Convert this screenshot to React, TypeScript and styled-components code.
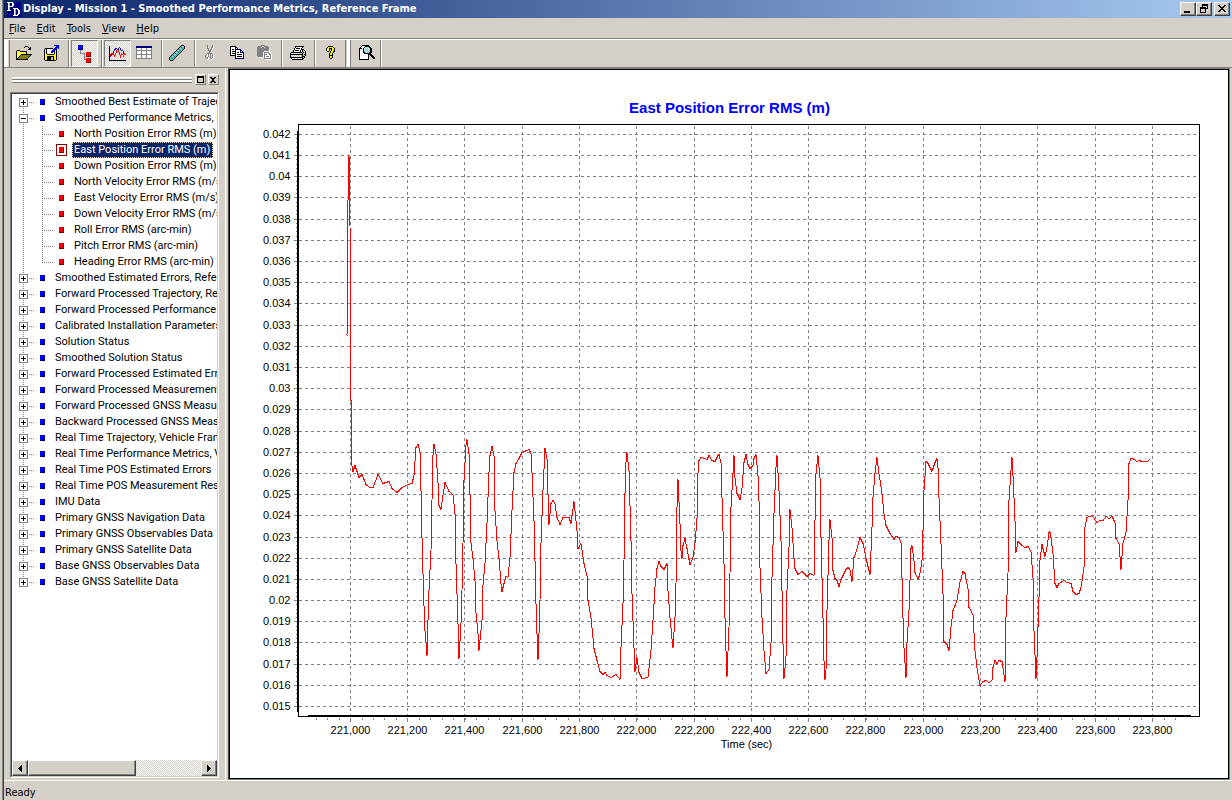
import React from "react";
import styled, { createGlobalStyle, css } from "styled-components";

const face = "#d4d0c8";
const tahoma = '"DejaVu Sans Condensed", "Liberation Sans", sans-serif';
const arial = '"Liberation Sans", Arial, sans-serif';
const compact = 'Roboto, "Liberation Sans", sans-serif';

const GlobalStyle = createGlobalStyle`
  * { box-sizing: border-box; }
  body { margin: 0; background: ${face}; color: #000; font: 11px/14px ${tahoma}; }
  button { font: inherit; color: inherit; padding: 0; margin: 0; border: 0; background: none; }
  ul { list-style: none; margin: 0; padding: 0; }
`;

const raised = css`
  background: ${face};
  border: 1px solid;
  border-color: #fff #404040 #404040 #fff;
  box-shadow: inset -1px -1px 0 #808080;
`;

const checker = css`
  background: repeating-conic-gradient(#fff 0 25%, ${face} 0 50%) 0 0 / 2px 2px;
`;

const Window = styled.div`
  display: flex;
  flex-direction: column;
  height: 100vh;
  min-height: 480px;
  border-left: 2px solid ${face};
  box-shadow: inset 1px 0 0 #808080, inset 2px 0 0 #404040;
  padding-left: 2px;
`;

const TitleBar = styled.header`
  display: flex;
  align-items: center;
  flex: none;
  height: 18px;
  padding: 0 2px 0 3px;
  background: linear-gradient(90deg, #0a246a, #a6caf0);
  color: #fff;
`;

const TitleText = styled.h1`
  flex: 1;
  margin: 0 0 0 2px;
  font: bold 11px/16px ${tahoma};
  white-space: nowrap;
  overflow: hidden;
`;

const CaptionButton = styled.button<{ $apart?: boolean }>`
  ${raised}
  display: flex;
  flex: none;
  width: 16px;
  height: 14px;
  margin-left: ${(p) => (p.$apart ? 2 : 0)}px;
`;

const MenuBar = styled.nav`
  display: flex;
  flex: none;
  gap: 11px;
  height: 22px;
  padding: 4px 5px 0;
  border-bottom: 1px solid #fff;
  box-shadow: inset 0 -1px 0 #808080;
`;

const MenuItem = styled.button`
  height: 14px;
  &::first-letter { text-decoration: underline; }
`;

const ToolBar = styled.div`
  display: flex;
  flex: none;
  height: 28px;
  border-bottom: 1px solid #808080;
`;

const Grip = styled.div`
  flex: none;
  width: 7px;
  height: 27px;
  background: linear-gradient(90deg, #fff 4px, ${face} 4px 5px, #808080 5px 6px, transparent 6px);
`;

const BandGrip = styled(Grip)`
  width: 9px;
  background: linear-gradient(90deg, transparent 1px, #808080 1px 2px, transparent 2px 3px, #fff 3px 6px, #808080 6px 7px, transparent 7px);
`;

const Separator = styled.div`
  flex: none;
  width: 6px;
  height: 27px;
  background: linear-gradient(90deg, #808080 50%, #fff 50%) 3px 0 / 2px 100% no-repeat;
`;

const BandEnd = styled(Separator)`
  background-position: 0 0;
`;

const ToolButton = styled.button<{ $pressed?: boolean }>`
  display: flex;
  flex: none;
  align-items: center;
  justify-content: center;
  width: 27px;
  height: 27px;
  padding-bottom: 2px;
  ${(p) =>
    p.$pressed &&
    css`
      ${checker}
      border: 1px solid;
      border-color: #808080 #fff #fff #808080;
      padding-bottom: 0;
    `}
`;

const Workspace = styled.main`
  display: flex;
  flex: 1;
  min-height: 0;
  padding-right: 2px;
`;

const SidePanel = styled.aside`
  display: flex;
  flex-direction: column;
  flex: none;
  width: 222px;
  padding: 6px 6px 2px 6px;
  border-right: 1px solid #fff;
  margin-right: 2px;
`;

const PanelHead = styled.div`
  display: flex;
  flex: none;
  gap: 2px;
  height: 18px;
  padding-left: 2px;
`;

const PanelGrip = styled.div`
  flex: 1;
  height: 7px;
  margin: 3px 1px 0 0;
  background: linear-gradient(#fff 0 1px, #e8e6e0 1px 2px, #808080 2px 3px, #fff 3px 5px, #808080 5px 6px, transparent 6px);
`;

const PanelButton = styled.button`
  ${raised}
  display: flex;
  flex: none;
  width: 11px;
  height: 11px;
  border-color: #fff #808080 #808080 #fff;
  box-shadow: none;
`;

const TreeBox = styled.div`
  display: flex;
  flex-direction: column;
  flex: 1;
  min-height: 0;
  background: #fff;
  border: 1px solid;
  border-color: #808080 #fff #fff #808080;
`;

const TreeInner = styled.div`
  display: flex;
  flex-direction: column;
  flex: 1;
  min-height: 0;
  border: 1px solid;
  border-color: #404040 ${face} ${face} #404040;
`;

const dotsDown = "repeating-linear-gradient(#808080 0 1px, transparent 1px 2px)";
const dotsAcross = "repeating-linear-gradient(90deg, #808080 0 1px, transparent 1px 2px)";

const Tree = styled.ul`
  flex: 1;
  min-height: 0;
  overflow: hidden;
  font: 11px/16px ${compact};
`;

const TreeRow = styled.li<{ $child?: boolean; $edge?: "first" | "last" }>`
  display: flex;
  align-items: center;
  height: 16px;
  white-space: nowrap;
  padding-left: ${(p) => (p.$child ? 44 : 7)}px;
  background:
    ${dotsDown} 11px ${(p) => (p.$edge === "first" ? "8px" : "0")} / 1px ${(p) => (p.$edge ? "8px" : "16px")} no-repeat,
    ${dotsAcross} 17px 8px / 6px 1px no-repeat;
`;

const ChildRow = styled(TreeRow)<{ $last?: boolean }>`
  background:
    ${dotsDown} 11px 0 / 1px 16px no-repeat,
    ${dotsDown} 30px 0 / 1px ${(p) => (p.$last ? 8 : 16)}px no-repeat,
    ${dotsAcross} 30px 8px / 12px 1px no-repeat;
`;

const Expander = styled.button<{ $open?: boolean }>`
  flex: none;
  width: 9px;
  height: 9px;
  margin-right: 12px;
  border: 1px solid #808080;
  background:
    linear-gradient(#000, #000) center / 5px 1px no-repeat,
    linear-gradient(#000, #000) center / 1px ${(p) => (p.$open ? 1 : 5)}px no-repeat,
    #fff;
`;

const Marker = styled.span<{ $color: string; $edge: string }>`
  flex: none;
  width: 5px;
  height: 6px;
  background: ${(p) => p.$color};
  border: 1px solid ${(p) => p.$edge};
  border-top-width: 0;
  border-left-width: 0;
`;

const MarkerFrame = styled.span<{ $active?: boolean }>`
  display: flex;
  flex: none;
  align-items: center;
  width: 11px;
  height: 12px;
  margin-right: 5px;
  padding-left: 2px;
  border: 1px solid ${(p) => (p.$active ? "#800000" : "transparent")};
`;

const Label = styled.button<{ $selected?: boolean; $gap?: number }>`
  height: 16px;
  padding: 0 3px 0 2px;
  margin-left: ${(p) => p.$gap || 0}px;
  line-height: 16px;
  ${(p) => p.$selected && css`background: #0a246a; color: #fff; outline: 1px dotted #f5db95; outline-offset: -1px;`}
`;

const ScrollBar = styled.div`
  display: flex;
  flex: none;
  height: 16px;
  ${checker}
`;

const ScrollButton = styled.button`
  ${raised}
  display: flex;
  align-items: center;
  justify-content: center;
  width: 16px;
  height: 16px;
`;

const Thumb = styled.div`
  ${raised}
  width: 108px;
  margin-right: auto;
`;

const ChartPanel = styled.section`
  flex: 1;
  min-width: 0;
  display: flex;
  background: #fff;
  border: 1px solid #808080;
  border-left-color: #404040;
  outline: 1px solid #000;
  outline-offset: -2px;
`;

const ChartSvg = styled.svg`
  display: block;
  width: 100%;
  height: 100%;
  font: 11px ${arial};
`;

const ChartTitle = styled.text`
  font: bold 15px ${arial};
  fill: #0000ff;
`;

const StatusBar = styled.footer`
  flex: none;
  height: 20px;
  padding: 5px 1px 0;
  border-top: 1px solid #fff;
`;

/* ---------- pixel icons ---------- */

const palette: Record<string, string> = {
  K: "#000000", W: "#ffffff", Y: "#ffff00", y: "#ffff99", o: "#808000", B: "#0000ff", N: "#000080",
  R: "#ff0000", r: "#800000", G: "#808080", L: "#c0c0c0", T: "#008080", C: "#60c8c8", P: "#9c9cf0",
};

const Sprite = ({ rows, className }: { rows: string[]; className?: string }) => {
  const width = Math.max(...rows.map((r) => r.length));
  const cells: React.ReactNode[] = [];
  rows.forEach((row, y) => {
    let x = 0;
    while (x < row.length) {
      let end = x + 1;
      while (end < row.length && row[end] === row[x]) end++;
      if (palette[row[x]]) cells.push(<rect key={`${x}-${y}`} x={x} y={y} width={end - x} height={1} fill={palette[row[x]]} />);
      x = end;
    }
  });
  return (
    <svg className={className} width={width} height={rows.length} viewBox={`0 0 ${width} ${rows.length}`} shapeRendering="crispEdges" aria-hidden>
      {cells}
    </svg>
  );
};

const icons = {
  open: [
    ".........KKK.....",
    "........K...K.K..",
    ".............KK..",
    "............KKK..",
    ".KKK.............",
    "KyYyKKKKKKK......",
    "KYyYyYyYyYK......",
    "KyYyYyYyYyK......",
    "KYyYyKKKKKKKKKKK.",
    "KyYyKoooooooooK..",
    "KYyKoooooooooK...",
    "KyKoooooooooK....",
    "KKoooooooooK.....",
    "KKKKKKKKKKKK.....",
  ],
  save: [
    "..........BBBBB.",
    "............BBB.",
    "...........BBBB.",
    ".KKKKKKKK.BBB.B.",
    "KYKWWWWW.BBBK...",
    "KYKWWWW.BBBYK...",
    "KYKWWWWBBBKYK...",
    "KYKWWWWBBWKYK...",
    "KYKWWWWWWWKYK...",
    "KYYKKKKKKKYYK...",
    "KYYYYYYYYYYYK...",
    "KYYKKKKKKKYYK...",
    "KYYKKKKLLKYYK...",
    "KYYKKKKLLKYYK...",
    "KYYKKKKLLKYYK...",
    ".KKKKKKKKKKK....",
  ],
  tree: [
    "BBBBN........",
    "BBBBN........",
    "BBBBN........",
    "BBBBN........",
    "NNNNN........",
    "..G..........",
    "..G..........",
    "..G.....RRRRr",
    "..GGGGG.RRRRr",
    "......G.RRRRr",
    "......G.RRRRr",
    "......G.rrrrr",
    "......G......",
    "......G.RRRRr",
    "......GGRRRRr",
    "........RRRRr",
    "........RRRRr",
    "........rrrrr",
  ],
  graph: [
    "K................",
    "K.........B......",
    "K.....BB.B.B.....",
    "K....BR.BB.B.....",
    "K....B.R.R..BB...",
    "K...B..R.R....B..",
    "K...B..RR.R...B..",
    "K.RRB.R...R.R.BR.",
    "KRBRR.R...R.RR.RR",
    "KRB..R.....R..R..",
    "KB...R.....R..R..",
    "K..........R.....",
    "K................",
    "K................",
    "KKKKKKKKKKKKKKKKK",
  ],
  table: [
    "NNNNNNNNNNNNNNNN.",
    "NNNNNNNNNNNNNNNN.",
    "GWWWWGWWWWGWWWWG.",
    "GWWWWGWWWWGWWWWG.",
    "GGGGGGGGGGGGGGGG.",
    "GWWWWGWWWWGWWWWG.",
    "GWWWWGWWWWGWWWWG.",
    "GWWWWGWWWWGWWWWG.",
    "GGGGGGGGGGGGGGGG.",
    "GWWWWGWWWWGWWWWG.",
    "GWWWWGWWWWGWWWWG.",
    "GWWWWGWWWWGWWWWG.",
    "GGGGGGGGGGGGGGGG.",
  ],
  ruler: [
    "............KKK..",
    "...........KCLCK.",
    "..........KCTCCK.",
    ".........KCLCTCK.",
    "........KCTCCCK..",
    ".......KCLCTCK...",
    "......KCTCCCK....",
    ".....KCLCTCK.....",
    "....KCTCCCK......",
    "...KCLCTCK.......",
    "..KCTCCCK........",
    ".KCLCTCK.........",
    "KCTCCCK..........",
    "KCCTCK...........",
    "KCCCK............",
    ".KKK.............",
  ],
  cut: [
    "..G....G....",
    "..G....GW...",
    "..GW..GGW...",
    "..GG..GW....",
    "...GWGGW....",
    "...GGGW.....",
    "....GGW.....",
    "....GW......",
    "..GGGGG.....",
    ".GWGWGWG....",
    "G.WGWG.GW...",
    "G.WG.G.GW...",
    "G.GW.G.GW...",
    ".GGW.GGW....",
    "..WW..WW....",
  ],
  copy: [
    "KKKKKK..........",
    "KWWWWKK.........",
    "KWWWWKWK........",
    "KWKKWNNNNNN.....",
    "KWWWWNWWWWNN....",
    "KWKKKNWWWWNWN...",
    "KWWWWNWKKWNNNN..",
    "KWKKKNWWWWWWWN..",
    "KWWWWNWKKKKKWN..",
    "KKKKKNWWWWWWWN..",
    ".....NWKKKKKWN..",
    ".....NWWWWWWWN..",
    ".....NNNNNNNNN..",
  ],
  paste: [
    "....GGGG........",
    ".GGGG..GGGG.....",
    "GGGG.GG.GGGG....",
    "GGGGGGGGGGGG....",
    "GGGGGGGGGGGGW...",
    "GGGGGGGGGGGGW...",
    "GGGGGGGWWWWWW...",
    "GGGGGGWGGGGGWW..",
    "GGGGGGWGWWWGGW..",
    "GGGGGGWGGGWWGGW.",
    "GGGGGGWGWWWWWGW.",
    ".GGGGGWGWGGGWGW.",
    "..WWWWWGWWWWWGW.",
    ".......GGGGGGGW.",
    "........WWWWWWW.",
  ],
  print: [
    ".....KKKKKKKKK..",
    ".....KWWWWWWK...",
    "....KWKKKKWK....",
    "....KWWWWWWKKK..",
    "...KWKKKKWKWKLK.",
    "...KWWWWWWKWKLLK",
    ".KKKKKKKKKKKLKLK",
    "KLWLWLWLWLWLKLLK",
    "KKKKKKKKKKKKKLKK",
    "KWLWLWLWLYYLKLLK",
    "KLWLWLWLWLWLKKK.",
    "KKKKKKKKKKKKKLK.",
    ".KWWLWWLWWLWKK..",
    "..KKKKKKKKKKK...",
  ],
  help: [
    "..KKKKK...",
    ".KYYYYYK..",
    "KYYKKKYYK.",
    "KYYK.KYYK.",
    "KYYK.KYYK.",
    ".KK.KYYKK.",
    "....KYYK..",
    "...KYYK...",
    "...KYYK...",
    "...KKKK...",
    "...KYYK...",
    "...KYYK...",
    "....KK....",
  ],
  preview: [
    "....KKKKKKK......",
    "...KWWWKKKKK.....",
    "..KWWWKWCWCKK....",
    ".KKKWKWCWCWCKK...",
    ".KWWWKCWCWCWKK...",
    ".KWWWKWCWCWCKK...",
    ".KWWWKCWCWCWKK...",
    ".KWWWKKCWCWKKK...",
    ".KWWWWKKKKKKK....",
    ".KWWWWWWWWKKKK...",
    ".KWWWWWWWWK.KKK..",
    ".KWWWWWWWWK..KKK.",
    ".KWWWWWWWWK...KKK",
    ".KWWWWWWWWK....KK",
    ".KKKKKKKKKK......",
  ],
  logo: [
    "WWWWWWNNNNNNNN",
    "NWPNNWWNNNNNNN",
    "NWPNNWWNNNNNNN",
    "NWPNNWWNNNNNNN",
    "NWWWWWNNNNNNNN",
    "NWPNNNNNNNNNNN",
    "NWPNNNWWWWWNNN",
    "NWPNNNNWPNWWNN",
    "WWWWNNNWPNNWWN",
    "NNNNNNNWPNNWWN",
    "NNNNNNNWPNNWWN",
    "NNNNNNNWPNNWWN",
    "NNNNNNNWPNWWNN",
    "NNNNNNWWWWWNNN",
    "NNNNNNNNNNNNNN",
  ],
  minimize: ["............", "............", "............", "............", "............", "............", "............", "............", "...KKKKKK...", "...KKKKKK..."],
  restore: [
    "............", ".....KKKKKK.", ".....KKKKKK.", ".....K....K.", "...KKKKKK.K.", "...KKKKKKKK.", "...K....K...", "...K....K...", "...K....K...", "...KKKKKK...",
  ],
  close: ["............", "............", "...KK....KK.", "....KK..KK..", ".....KKKK...", "......KK....", ".....KKKK...", "....KK..KK..", "...KK....KK."],
  dockMax: [".........", ".KKKKKKK.", ".KKKKKKK.", ".K.....K.", ".K.....K.", ".K.....K.", ".K.....K.", ".KKKKKKK."],
  dockClose: [".........", ".........", ".KK..KK..", "..KKKK...", "...KK....", "...KK....", "..KKKK...", ".KK..KK.."],
  left: ["...K", "..KK", ".KKK", "KKKK", ".KKK", "..KK", "...K"],
  right: ["K...", "KK..", "KKK.", "KKKK", "KKK.", "KK..", "K..."],
};

/* ---------- data ---------- */

type Tool = { icon: keyof typeof icons; label: string; pressed?: boolean } | "|";

const tools: Tool[] = [
  { icon: "open", label: "Open" }, { icon: "save", label: "Export" }, "|",
  { icon: "tree", label: "Plot tree", pressed: true }, "|",
  { icon: "graph", label: "Graph", pressed: true }, { icon: "table", label: "Table" }, "|",
  { icon: "ruler", label: "Measure" }, "|",
  { icon: "cut", label: "Cut" }, { icon: "copy", label: "Copy" }, { icon: "paste", label: "Paste" }, "|",
  { icon: "print", label: "Print" }, "|",
  { icon: "help", label: "Help" },
];

const groups: { name: string; items?: string[] }[] = [
  { name: "Smoothed Best Estimate of Trajectory" },
  {
    name: "Smoothed Performance Metrics, Reference Frame",
    items: [
      "North Position Error RMS (m)", "East Position Error RMS (m)", "Down Position Error RMS (m)",
      "North Velocity Error RMS (m/s)", "East Velocity Error RMS (m/s)", "Down Velocity Error RMS (m/s)",
      "Roll Error RMS (arc-min)", "Pitch Error RMS (arc-min)", "Heading Error RMS (arc-min)",
    ],
  },
  { name: "Smoothed Estimated Errors, Reference Frame" },
  { name: "Forward Processed Trajectory, Reference Frame" },
  { name: "Forward Processed Performance Metrics" },
  { name: "Calibrated Installation Parameters" },
  { name: "Solution Status" },
  { name: "Smoothed Solution Status" },
  { name: "Forward Processed Estimated Errors" },
  { name: "Forward Processed Measurement Residuals" },
  { name: "Forward Processed GNSS Measurements" },
  { name: "Backward Processed GNSS Measurements" },
  { name: "Real Time Trajectory, Vehicle Frame" },
  { name: "Real Time Performance Metrics, Vehicle Frame" },
  { name: "Real Time POS Estimated Errors" },
  { name: "Real Time POS Measurement Residuals" },
  { name: "IMU Data" },
  { name: "Primary GNSS Navigation Data" },
  { name: "Primary GNSS Observables Data" },
  { name: "Primary GNSS Satellite Data" },
  { name: "Base GNSS Observables Data" },
  { name: "Base GNSS Satellite Data" },
];

const series = `347,335 348,200 349,155 350,225 351,400 352,465 353,471 355,465 359,477 362,474 366,484 370,487
373,487 378,474 383,483 389,481 392,488 397,492 402,487 408,484 412,483 414,475 416,447 418,444 420,451 421,490 422,537
423,573 424,605 425,630 427,655 428,620 429,590 431,550 432,500 433,455 434,444 436,453 438,482 439,505 441,509 443,495
445,482 449,491 453,494 455,513 456,563 458,623 459,658 461,623 462,590 463,543 464,480 466,445 467,439 469,453 470,493
471,542 473,558 475,580 476,612 478,633 479,650 482,620 483,585 485,563 487,523 489,472 490,455 492,446 494,455 495,510
497,540 499,558 501,583 502,591 504,583 506,576 508,577 510,557 512,510 514,472 516,463 519,458 522,452 529,449 531,453
532,472 534,520 535,560 536,603 537,633 538,659 539,633 540,600 541,543 543,490 545,448 547,458 548,493 549,524 551,503
553,500 555,503 557,517 560,524 563,517 569,517 571,523 574,501 577,530 578,548 581,543 584,563 587,575 588,600 591,617
594,648 597,660 600,671 603,674 605,672 607,675 611,677 616,674 620,679 621,647 623,603 624,560 625,493 626,462 627,452
629,470 631,540 632,593 634,647 635,671 637,657 639,672 642,678 648,677 651,650 653,620 655,587 657,568 659,561 661,566
664,569 667,563 668,590 670,617 672,638 673,647 675,617 676,583 677,507 678,479 680,523 681,550 682,558 683,545 685,538
687,548 689,559 690,564 693,557 695,543 697,518 698,473 699,460 701,457 705,458 707,459 709,455 712,460 715,461 718,455
719,454 721,462 722,497 724,563 725,617 726,650 727,676 729,627 730,573 731,507 733,473 734,455 735,477 737,493 740,499
742,488 744,462 746,454 748,464 750,468 753,465 754,458 756,454 758,475 759,500 760,567 762,617 764,650 766,673 769,669
771,643 772,577 774,513 776,467 777,455 779,490 781,540 782,590 783,643 784,678 786,657 787,590 789,547 790,509 792,527
794,557 795,568 798,574 802,571 807,576 810,573 814,575 815,520 816,473 818,455 820,477 821,537 823,617 824,660 825,679
826,670 827,610 829,540 830,519 832,537 833,570 835,578 837,580 839,586 841,579 843,575 846,569 848,567 850,569 852,581
854,557 857,549 860,537 863,543 867,562 870,574 872,527 873,497 875,473 877,457 879,473 882,493 884,513 886,525 890,533
894,539 896,536 899,537 901,542 902,577 903,617 904,647 906,677 907,643 909,610 910,580 911,548 912,545 914,560 915,572
918,579 920,573 922,560 923,530 924,490 926,461 928,463 932,471 935,462 937,458 938,467 939,497 941,543 943,593 944,641
947,644 949,650 951,627 953,610 957,600 960,582 963,571 965,573 968,588 969,607 973,614 975,650 977,667 980,685
983,681 986,680 989,682 992,680 993,667 995,660 997,663 999,660 1002,661 1003,667 1005,681 1006,617 1008,573 1009,500
1011,470 1012,457 1013,475 1015,520 1016,552 1018,541 1021,544 1025,547 1028,546 1031,551 1033,577 1034,630 1036,678
1037,657 1039,597 1040,560 1042,544 1045,556 1047,547 1049,532 1050,531 1051,537 1053,553 1055,583 1057,587 1059,583
1064,580 1067,582 1071,583 1073,591 1076,594 1079,593 1081,587 1084,567 1085,527 1087,517 1092,515 1097,522 1100,520
1103,520 1106,516 1109,518 1112,516 1115,522 1116,538 1119,543 1121,569 1123,543 1126,532 1128,500 1129,463 1131,458
1133,458 1137,461 1139,460 1142,461 1147,461 1150,459`;

/* ---------- chart ---------- */

const xAt = (i: number) => Math.floor(350.2 + i * 57.3);
const yAt = (i: number) => Math.floor(134.4 + i * 21.19);
const span = (n: number) => Array.from({ length: n }, (_, i) => i);

const Chart = () => (
  <ChartSvg viewBox="230 69 999 710" role="img" aria-label="East Position Error RMS over time">
    <ChartTitle x={730} y={113} textAnchor="middle">East Position Error RMS (m)</ChartTitle>
    <g shapeRendering="crispEdges" transform="translate(0.5 0.5)" fill="none" stroke="#808080">
      {span(28).map((i) => (
        <g key={i}>
          <path d={`M299 ${yAt(i)}H1198`} strokeDasharray="3 3" />
          <path d={`M294 ${yAt(i)}H298`} />
          {i < 27 && span(4).map((k) => <path key={k} d={`M296 ${Math.floor(134.4 + (i + (k + 1) / 5) * 21.19)}H298`} />)}
        </g>
      ))}
      {span(15).map((i) => (
        <g key={i}>
          <path d={`M${xAt(i)} 125V715`} strokeDasharray="3 3" />
          <path d={`M${xAt(i)} 717V721`} />
        </g>
      ))}
      {span(76).map((i) => (
        <path key={i} d={`M${Math.floor(316 + i * 11.46 + 0.2)} 717V719`} />
      ))}
      <path d="M298 124H1199V716H298Z" stroke="#000" />
      <path d="M297 130V711M308 715H1191" stroke="#000" />
      <polyline points={series} stroke="#f00" />
    </g>
    {span(28).map((i) => (
      <text key={i} x={291} y={yAt(i) + 4} textAnchor="end">{String((42 - i) / 1000)}</text>
    ))}
    {span(15).map((i) => (
      <text key={i} x={xAt(i) + 1} y={734} textAnchor="middle">{(221000 + i * 200).toLocaleString("en-US")}</text>
    ))}
    <text x={747} y={748} textAnchor="middle">Time (sec)</text>
  </ChartSvg>
);

export default function App() {
  return (
    <>
      <GlobalStyle />
      <Window>
        <TitleBar>
          <Sprite rows={icons.logo} />
          <TitleText>Display - Mission 1 - Smoothed Performance Metrics, Reference Frame</TitleText>
          <CaptionButton aria-label="Minimize"><Sprite rows={icons.minimize} /></CaptionButton>
          <CaptionButton aria-label="Restore"><Sprite rows={icons.restore} /></CaptionButton>
          <CaptionButton aria-label="Close" $apart><Sprite rows={icons.close} /></CaptionButton>
        </TitleBar>
        <MenuBar>
          {["File", "Edit", "Tools", "View", "Help"].map((m) => <MenuItem key={m}>{m}</MenuItem>)}
        </MenuBar>
        <ToolBar role="toolbar">
          <Grip />
          {tools.map((t, i) =>
            t === "|" ? <Separator key={i} /> : (
              <ToolButton key={i} aria-label={t.label} $pressed={t.pressed}><Sprite rows={icons[t.icon]} /></ToolButton>
            )
          )}
          <BandGrip />
          <ToolButton aria-label="Print preview"><Sprite rows={icons.preview} /></ToolButton>
          <BandEnd />
        </ToolBar>
        <Workspace>
          <SidePanel>
            <PanelHead>
              <PanelGrip />
              <PanelButton aria-label="Maximize panel"><Sprite rows={icons.dockMax} /></PanelButton>
              <PanelButton aria-label="Close panel"><Sprite rows={icons.dockClose} /></PanelButton>
            </PanelHead>
            <TreeBox>
              <TreeInner>
                <Tree>
                  {groups.map((g, gi) => (
                    <React.Fragment key={g.name}>
                      <TreeRow $edge={gi === 0 ? "first" : gi === groups.length - 1 ? "last" : undefined}>
                        <Expander aria-label={`Toggle ${g.name}`} $open={!!g.items} />
                        <Marker $color="#0000ff" $edge="#000080" />
                        <Label $gap={8}>{g.name}</Label>
                      </TreeRow>
                      {g.items?.map((name, i) => (
                        <ChildRow key={name} $child $last={i === g.items!.length - 1}>
                          <MarkerFrame $active={i === 1}><Marker $color="#ff0000" $edge="#800000" /></MarkerFrame>
                          <Label $selected={i === 1}>{name}</Label>
                        </ChildRow>
                      ))}
                    </React.Fragment>
                  ))}
                </Tree>
                <ScrollBar>
                  <ScrollButton aria-label="Scroll left"><Sprite rows={icons.left} /></ScrollButton>
                  <Thumb />
                  <ScrollButton aria-label="Scroll right"><Sprite rows={icons.right} /></ScrollButton>
                </ScrollBar>
              </TreeInner>
            </TreeBox>
          </SidePanel>
          <ChartPanel><Chart /></ChartPanel>
        </Workspace>
        <StatusBar>Ready</StatusBar>
      </Window>
    </>
  );
}
